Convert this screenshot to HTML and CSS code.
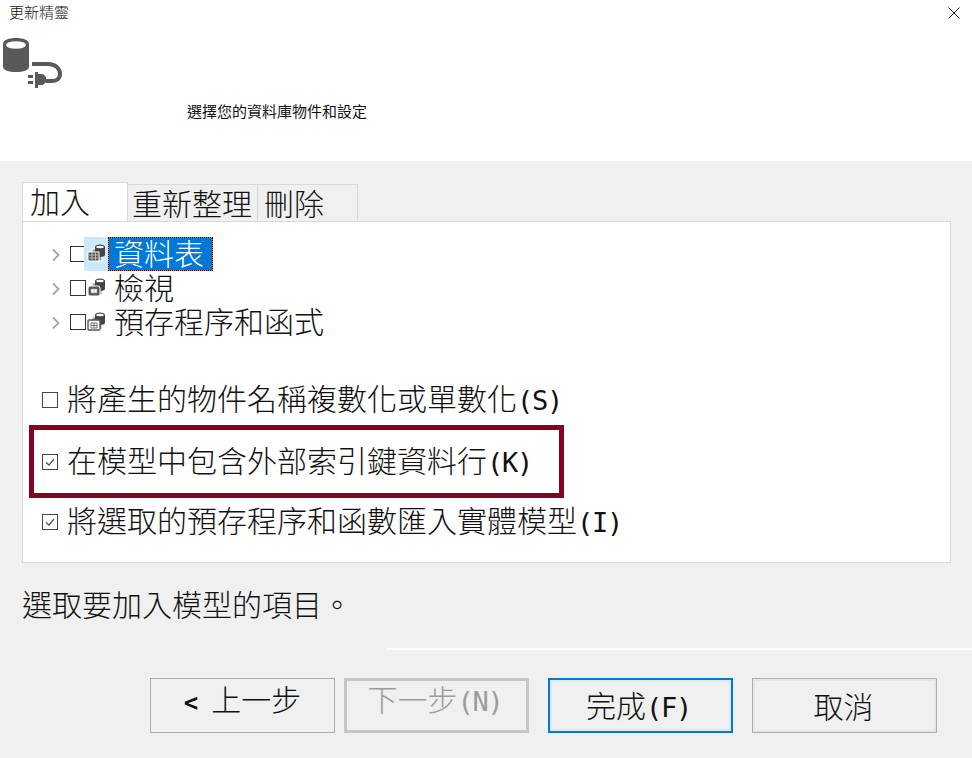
FILE: index.html
```html
<!DOCTYPE html>
<html lang="zh-Hant">
<head>
<meta charset="utf-8">
<title>更新精靈</title>
<link rel="stylesheet" href="styles.css">
</head>
<body>
<div class="wizard">
  <header class="head">
    <div class="titlebar">
      <span class="title">更新精靈</span>
      <svg class="close" width="12" height="12" viewBox="0 0 12 12"><path d="M.5.5l11 11M11.500.5l-11 11" stroke="#222" stroke-width="1" fill="none"/></svg>
    </div>
    <svg class="logo" width="64" height="52" viewBox="0 0 64 52">
      <path d="M3 8c0-4 6-6 13-6s13 2 13 6v23c0 3-6 5-13 5S3 34 3 31z" fill="#595959"/>
      <ellipse cx="16" cy="9" rx="10" ry="3.800" fill="#fff"/>
      <path d="M32 28H48C56 28 60 33 60 38C60 43 56 45 52 45H46" fill="none" stroke="#595959" stroke-width="4"/>
      <path d="M35 36h3v16h-3z" fill="#595959"/>
      <path d="M38 38h5l3 3v5l-3 3h-5z" fill="#595959"/>
      <path d="M28 39h5v3h-5zM28 45h5v3h-5z" fill="#595959"/>
    </svg>
    <p class="subtitle">選擇您的資料庫物件和設定</p>
  </header>

  <main class="body">
    <nav class="tabs">
      <span class="tab active">加入</span>
      <span class="tab refresh">重新整理</span>
      <span class="tab remove">刪除</span>
    </nav>
    <section class="panel">
      <ul class="tree">
        <li class="node">
          <svg class="chev" width="8" height="14" viewBox="0 0 8 14"><path d="M1 1.500l5.500 5.500L1 12.500" fill="none" stroke="#a6a6a6" stroke-width="1.800"/></svg>
          <span class="box"></span>
          <span class="nicon sel">
            <svg width="22" height="20" viewBox="0 0 22 20"><use href="#db"/><rect x="3" y="8" width="11" height="9" fill="#555" stroke="#fff"/><path d="M4 11h9M4 14h9M7 9v7M10.500 9v7" stroke="#ccc" stroke-width=".8"/></svg>
          </span>
          <span class="label selected">資料表</span>
        </li>
        <li class="node">
          <svg class="chev" width="8" height="14" viewBox="0 0 8 14"><path d="M1 1.500l5.500 5.500L1 12.500" fill="none" stroke="#a6a6a6" stroke-width="1.800"/></svg>
          <span class="box"></span>
          <span class="nicon">
            <svg width="22" height="20" viewBox="0 0 22 20"><use href="#db"/><rect x="3" y="8" width="12" height="10" rx="2" fill="#555" stroke="#fff"/><path d="M6 11h6v4H6zM9 10v6" fill="#fff" stroke="#999" stroke-width=".6"/></svg>
          </span>
          <span class="label">檢視</span>
        </li>
        <li class="node">
          <svg class="chev" width="8" height="14" viewBox="0 0 8 14"><path d="M1 1.500l5.500 5.500L1 12.500" fill="none" stroke="#a6a6a6" stroke-width="1.800"/></svg>
          <span class="box"></span>
          <span class="nicon">
            <svg width="22" height="20" viewBox="0 0 22 20"><use href="#db"/><rect x="3" y="8" width="12" height="10" rx="1" fill="#fff" stroke="#555" stroke-width="1.400"/><path d="M6 11h6v5H6zM9 11v5M6 13.500h6" fill="none" stroke="#555" stroke-width=".8"/></svg>
          </span>
          <span class="label">預存程序和函式</span>
        </li>
      </ul>
      <svg width="0" height="0" class="defs"><defs><g id="db"><rect x="7" y="5" width="10" height="12" fill="#999" stroke="#fff"/><path d="M10 3c0-1.500 2.500-2.500 5-2.500s5 1 5 2.500v8c0 1.200-2.500 2-5 2s-5-.8-5-2z" fill="#444"/><ellipse cx="15" cy="3" rx="3.800" ry="1.200" fill="#fff"/></g></defs></svg>

      <label class="option first">
        <span class="check"></span>
        <span class="otext">將產生的物件名稱複數化或單數化<span class="mono">(S)</span></span>
      </label>
      <label class="option flagged">
        <span class="check"><svg width="12" height="12" viewBox="0 0 12 12"><path d="M2 6.500l3 2.500 5-6" fill="none" stroke="#555" stroke-width="1.300"/></svg></span>
        <span class="otext">在模型中包含外部索引鍵資料行<span class="mono">(K)</span></span>
      </label>
      <label class="option last">
        <span class="check"><svg width="12" height="12" viewBox="0 0 12 12"><path d="M2 6.500l3 2.500 5-6" fill="none" stroke="#555" stroke-width="1.300"/></svg></span>
        <span class="otext">將選取的預存程序和函數匯入實體模型<span class="mono">(I)</span></span>
      </label>
    </section>
    <p class="status">選取要加入模型的項目。</p>
    <div class="rule"></div>
    <footer class="buttons">
      <button class="btn back"><span class="mono arrow">&lt;</span>上一步</button>
      <button class="btn disabled next">下一步<span class="mono">(N)</span></button>
      <button class="btn primary">完成<span class="mono">(F)</span></button>
      <button class="btn cancel">取消</button>
    </footer>
  </main>
</div>
</body>
</html>
```
FILE: styles.css
```css
* { box-sizing: border-box; }
html, body { margin: 0; padding: 0; }
body {
  width: 972px;
  height: 758px;
  overflow: hidden;
  background: #f0f0f0;
  color: #111;
  font-family: "Noto Sans CJK TC", "Liberation Sans", sans-serif;
  font-weight: 300;
}
.wizard { display: flex; flex-direction: column; height: 758px; }
.head { background: #fff; height: 161px; flex: none; display: flex; flex-direction: column; }
.titlebar { display: flex; justify-content: space-between; align-items: center; height: 26px; padding: 0 12px 0 9px; font-size: 15px; line-height: 26px; }
.title { position: relative; top: -1px; }
.close { flex: none; }
.logo { flex: none; margin: 10px 0 13px 0; display: block; }
.subtitle { margin: 0 0 0 187px; font-size: 15px; line-height: 20px; height: 20px; font-weight: 400; }
.body { flex: 1; display: flex; flex-direction: column; padding: 21px 0 0 22px; }
.tabs { display: flex; align-items: flex-end; height: 39px; font-size: 30px; line-height: 35px; position: relative; z-index: 1; }
.tab { height: 37px; border: 1px solid #d9d9d9; border-left: 0; border-bottom: 0; background: #f0f0f0; white-space: nowrap; }
.tab.active { height: 39px; width: 106px; padding: 0 7px; border-left: 1px solid #d9d9d9; background: #fff; }
.tab.refresh { width: 130px; padding-left: 4px; }
.tab.remove { width: 100px; padding-left: 6px; }
.panel { width: 929px; height: 342px; background: #fff; border: 1px solid #d9d9d9; padding: 15px 6px 0 6px; }
.defs { position: absolute; }
.tree { list-style: none; margin: 0; padding: 0 0 0 23px; }
.node { display: flex; align-items: center; height: 34px; font-size: 30px; }
.chev { flex: none; margin: 2px 10px 0 0; }
.box { width: 16px; height: 16px; border: 1.300px solid #333; background: #fff; flex: none; }
.nicon { width: 24px; height: 34px; display: flex; align-items: center; flex: none; margin-left: -2px; padding-left: 1px; }
.nicon.sel { background: #cce8ff; }
.label { padding: 0 9px 0 6px; line-height: 30px; height: 34px; white-space: nowrap; }
.label.selected { background: #0078d7; color: #fff; box-shadow: inset 0 0 0 1px #f08000; outline: 1px dotted #000; outline-offset: -1px; }
.option { display: flex; align-items: center; font-size: 30px; white-space: nowrap; gap: 9px; }
.otext { margin-bottom: 6px; }
.option.first { height: 40px; margin: 41px 0 0 13px; }
.option.flagged { width: 535px; height: 73px; margin: 5px 0 0 0; padding-left: 8px; gap: 9px; border: 5px solid #870020; }
.option.last { height: 40px; margin: 4px 0 0 13px; }
.check { width: 16px; height: 16px; border: 1.300px solid #444; background: #fff; flex: none; display: flex; align-items: center; justify-content: center; }
.mono { font-family: "DejaVu Sans Mono", "Liberation Mono", monospace; font-size: 27px; letter-spacing: -1.250px; font-weight: 400; }
.arrow { font-weight: 700; font-size: 24px; letter-spacing: 0; margin-right: 13px; }
.status { margin: 19px 0 0 0; font-size: 30px; line-height: 42px; height: 42px; }
.rule { height: 1.500px; background: #fff; margin: 24px 0 0 365px; }
.buttons { display: flex; gap: 19px; padding: 28px 0 0 128px; }
.btn { width: 185px; height: 55px; background: #f0f0f0; border: 1.500px solid #adadad; box-shadow: inset 0 0 0 2px #e6e6e6; font: inherit; font-size: 30px; line-height: 1; color: #111; padding: 0; white-space: nowrap; }
.btn.back, .btn.next { padding-bottom: 12px; box-shadow: none; }
.btn.back { margin-right: -10px; }
.btn.next { padding-right: 3px; }
.btn.disabled { color: #9c9c9c; border: 3px solid #c6c6c6; }
.btn.primary { border: 2.500px solid #0078d7; padding-right: 4px; }
.btn.cancel { padding-right: 2px; }
```
